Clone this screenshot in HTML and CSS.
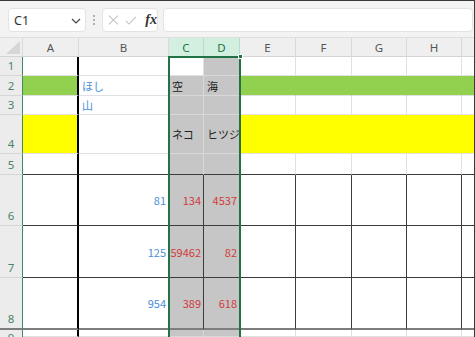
FILE: index.html
```html
<!DOCTYPE html>
<html lang="ja">
<head>
<meta charset="utf-8">
<title>Sheet</title>
<link rel="stylesheet" href="styles.css">
</head>
<body>
<div class="fbar">
  <div class="namebox"><span class="nb-text">C1</span>
    <svg class="chev" width="10" height="6" viewBox="0 0 10 6"><path d="M1 1 L5 5 L9 1" fill="none" stroke="#444" stroke-width="1.2"/></svg>
  </div>
  <div class="dots"><svg width="4" height="12" viewBox="0 0 4 12"><circle cx="2" cy="2" r="1" fill="#9a9a9a"/><circle cx="2" cy="6" r="1" fill="#9a9a9a"/><circle cx="2" cy="10" r="1" fill="#9a9a9a"/></svg></div>
  <div class="fxbox">
    <svg class="ico" width="12" height="12" viewBox="0 0 12 12"><path d="M1 1 L11 11 M11 1 L1 11" stroke="#c4c4c4" stroke-width="1.2" fill="none"/></svg>
    <svg class="ico" width="13" height="11" viewBox="0 0 13 11"><path d="M1 6 L4.5 9.5 L12 1.5" stroke="#c4c4c4" stroke-width="1.2" fill="none"/></svg>
    <span class="fx">fx</span>
  </div>
  <div class="finput"></div>
</div>
<div class="sheet">
  <div class="corner"><svg width="14" height="13" viewBox="0 0 14 13"><path d="M14 0 L14 13 L0 13 Z" fill="#d6d6d6"/></svg></div>
  <div class="ch">A</div><div class="ch">B</div><div class="ch sel">C</div><div class="ch sel">D</div><div class="ch">E</div><div class="ch">F</div><div class="ch">G</div><div class="ch">H</div><div class="ch last"></div>

  <div class="rh">1</div><div class="c ca"></div><div class="c"></div><div class="c"></div><div class="c s"></div><div class="c"></div><div class="c"></div><div class="c"></div><div class="c"></div><div class="c"></div>

  <div class="rh">2</div><div class="c ca green"></div><div class="c t blue">ほし</div><div class="c s t">空</div><div class="c s t">海</div><div class="c green"></div><div class="c green"></div><div class="c green"></div><div class="c green"></div><div class="c green"></div>

  <div class="rh">3</div><div class="c ca"></div><div class="c t blue">山</div><div class="c s"></div><div class="c s"></div><div class="c"></div><div class="c"></div><div class="c"></div><div class="c"></div><div class="c"></div>

  <div class="rh">4</div><div class="c ca yellow"></div><div class="c"></div><div class="c s t">ネコ</div><div class="c s t">ヒツジ</div><div class="c yellow"></div><div class="c yellow"></div><div class="c yellow"></div><div class="c yellow"></div><div class="c yellow"></div>

  <div class="rh">5</div><div class="c ca r5"></div><div class="c r5"></div><div class="c s r5"></div><div class="c s r5"></div><div class="c r5"></div><div class="c r5"></div><div class="c r5"></div><div class="c r5"></div><div class="c r5"></div>

  <div class="rh">6</div><div class="c ca b"></div><div class="c b n blue">81</div><div class="c s b n red">134</div><div class="c s b n red">4537</div><div class="c b"></div><div class="c b"></div><div class="c b"></div><div class="c b"></div><div class="c b"></div>

  <div class="rh">7</div><div class="c ca b"></div><div class="c b n blue">125</div><div class="c s b n red">59462</div><div class="c s b n red">82</div><div class="c b"></div><div class="c b"></div><div class="c b"></div><div class="c b"></div><div class="c b"></div>

  <div class="rh r8">8</div><div class="c ca b r8"></div><div class="c b n blue r8">954</div><div class="c s b n red r8">389</div><div class="c s b n red r8">618</div><div class="c b r8"></div><div class="c b r8"></div><div class="c b r8"></div><div class="c b r8"></div><div class="c b r8"></div>

  <div class="rh r9">9</div><div class="c ca"></div><div class="c"></div><div class="c s"></div><div class="c s"></div><div class="c"></div><div class="c"></div><div class="c"></div><div class="c"></div><div class="c"></div>

  <div class="selbox"><span class="handle"></span></div>
</div>
</body>
</html>
```
FILE: styles.css
```css
* { box-sizing: border-box; }
html, body { margin: 0; padding: 0; overflow: hidden; }
body {
  width: 475px;
  height: 337px;
  background: #f3f3f3;
  font-family: "Noto Sans CJK JP", "Noto Sans", sans-serif;
  position: relative;
  border-top: 1px solid #3a3a3a;
  border-right: 1px solid #3a3a3a;
}

/* formula bar */
.fbar {
  height: 37px;
  display: flex;
  align-items: flex-start;
  padding: 7px 0 0 8px;
  border-bottom: 1px solid #dedede;
}
.namebox {
  width: 78px;
  height: 24px;
  background: #fff;
  border: 1px solid #e3e3e3;
  border-radius: 4px;
  display: flex;
  align-items: center;
  justify-content: space-between;
  padding: 0 4px 0 5px;
}
.nb-text {
  font-family: "Noto Sans", sans-serif;
  font-size: 12.5px;
  color: #333;
}
.chev { margin-top: 1px; }
.dots {
  width: 16px;
  height: 24px;
  display: flex;
  align-items: center;
  justify-content: center;
}
.fxbox {
  width: 56px;
  height: 24px;
  background: #fff;
  border: 1px solid #e3e3e3;
  border-radius: 4px;
  display: flex;
  align-items: center;
  padding: 0 0 0 5px;
  gap: 6px;
}
.fx {
  font-family: "Liberation Serif", serif;
  font-style: italic;
  font-weight: bold;
  font-size: 14px;
  color: #333;
  margin-left: 3px;
}
.finput {
  margin-left: 5px;
  width: 310px;
  height: 24px;
  background: #fff;
  border: 1px solid #e3e3e3;
  border-radius: 4px;
}

/* sheet grid */
.sheet {
  position: relative;
  height: 299px;
  overflow: hidden;
  display: grid;
  grid-template-columns: 23px 56px 90px 35px 36px 56px 56px 55px 55px 13px;
  grid-template-rows: 19px 19px 20px 19px 39px 21px 51px 52px 52px 7px;
  background: #fff;
}
.corner {
  background: #efefef;
  border-right: 1px solid #dadada;
  border-bottom: 1px solid #d4d4d4;
  display: flex;
  align-items: flex-end;
  justify-content: flex-end;
  padding: 0 2px 2px 0;
}
.ch {
  background: #efefef;
  border-right: 1px solid #dadada;
  border-bottom: 1px solid #d4d4d4;
  font-family: "Noto Sans", sans-serif;
  font-size: 11.5px;
  color: #555;
  display: flex;
  align-items: center;
  justify-content: center;
}
.ch.sel {
  background: #d3efdf;
  color: #217346;
  border-right-color: #b9dcc8;
}
.ch.last { border-right: none; }
.rh {
  background: #ececec;
  border-right: 1px solid #3d8b5e;
  border-bottom: 1px solid #d6d6d6;
  font-family: "Noto Sans", sans-serif;
  font-size: 11.5px;
  color: #4a8466;
  display: flex;
  align-items: flex-end;
  justify-content: center;
  padding-bottom: 1px;
  line-height: 16px;
  overflow: hidden;
}
.rh.r9 {
  align-items: flex-start;
  padding: 1px 0 0;
  line-height: 14px;
  border-bottom: none;
}
.c {
  border-right: 1px solid #e1e1e1;
  border-bottom: 1px solid #e1e1e1;
  font-size: 11px;
  display: flex;
  align-items: center;
  overflow: hidden;
  white-space: nowrap;
  color: #222;
}
.c.t { padding-left: 3px; }
.c.n { justify-content: flex-end; padding-right: 2px; }
.c.ca { border-right: 2px solid #000; }
.c.s { background: #c6c6c6; border-right-color: #d8d8d8; border-bottom-color: #d8d8d8; }
.green { background: #92d050; border-right-color: #92d050; }
.c.ca.green { border-right-color: #000; }
.yellow { background: #ffff00; border-right-color: #ffff00; }
.c.ca.yellow { border-right-color: #000; }
.blue { color: #4a8ed8; }
.red { color: #d13b3b; }
.c.r5 { border-bottom-color: #3c3c3c; }
.c.b { border-right-color: #3c3c3c; border-bottom-color: #3c3c3c; }
.c.ca.b { border-right-color: #000; }
.r8 { border-bottom: 2px solid #7d7d7d !important; }
.c.s.b { border-right-color: #3c3c3c; border-bottom-color: #3c3c3c; }

.selbox {
  position: absolute;
  left: 168px;
  top: 18px;
  width: 73px;
  height: 290px;
  border: 2px solid #217346;
  pointer-events: none;
}
.handle {
  position: absolute;
  right: -4px;
  top: -4px;
  width: 5px;
  height: 5px;
  background: #217346;
  border: 1px solid #fff;
}
```
